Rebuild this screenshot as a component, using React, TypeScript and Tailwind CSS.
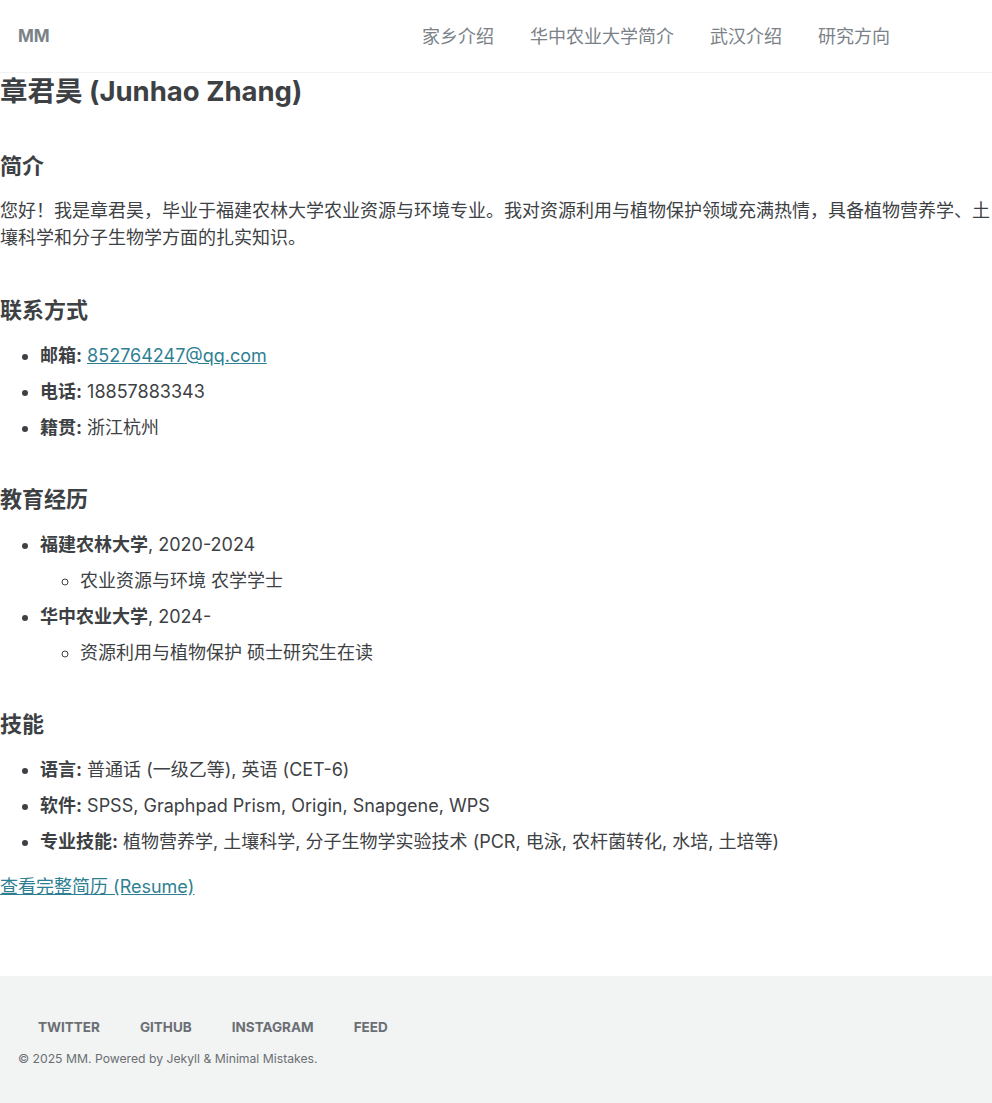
import React from "react"

const font = { fontFamily: 'Inter, "Noto Sans CJK SC", sans-serif' }

const navItems = ["家乡介绍", "华中农业大学简介", "武汉介绍", "研究方向"]
const footerLinks = ["Twitter", "GitHub", "Instagram", "Feed"]

function H2({ children, className }: { children: React.ReactNode; className: string }) {
  return <h2 className={"text-[22px] leading-[28px] font-bold " + className}>{children}</h2>
}

function Li({ children }: { children: React.ReactNode }) {
  return <li className="mb-[9px] leading-[27px]">{children}</li>
}

export default function App() {
  return (
    <div className="min-h-[1103px] flex flex-col bg-white text-[#3d4144]" style={font}>
      <header className="h-[73px] border-b border-[#f2f3f3] flex items-center pl-[18px] pr-[102px]">
        <a className="pt-[2px] text-[17px] font-bold text-[#7a8288]">MM</a>
        <nav className="ml-auto flex gap-[36px]">
          {navItems.map((n) => (
            <a key={n} className="text-[18px] text-[#7a8288]">{n}</a>
          ))}
        </nav>
      </header>

      <main className="flex-1 text-[18px]">
        <h1 className="mt-[1px] text-[27.5px] leading-[35px] font-bold">章君昊 (Junhao Zhang)</h1>

        <H2 className="mt-[43px] mb-[17px]">简介</H2>
        <p className="leading-[27px]">
          您好！我是章君昊，毕业于福建农林大学农业资源与环境专业。我对资源利用与植物保护领域充满热情，具备植物营养学、土壤科学和分子生物学方面的扎实知识。
        </p>

        <H2 className="mt-[45px] mb-[18px]">联系方式</H2>
        <ul className="list-disc pl-10">
          <Li><b>邮箱:</b> <a className="text-[#2f7f93] underline">852764247@qq.com</a></Li>
          <Li><b>电话:</b> 18857883343</Li>
          <Li><b>籍贯:</b> 浙江杭州</Li>
        </ul>

        <H2 className="mt-[44px] mb-[18px]">教育经历</H2>
        <ul className="list-disc pl-10">
          <Li>
            <b>福建农林大学</b>, 2020-2024
            <ul className="list-[circle] pl-10 mt-[9px]">
              <li className="leading-[27px]">农业资源与环境 农学学士</li>
            </ul>
          </Li>
          <Li>
            <b>华中农业大学</b>, 2024-
            <ul className="list-[circle] pl-10 mt-[9px]">
              <li className="leading-[27px]">资源利用与植物保护 硕士研究生在读</li>
            </ul>
          </Li>
        </ul>

        <H2 className="mt-[44px] mb-[18px]">技能</H2>
        <ul className="list-disc pl-10">
          <Li><b>语言:</b> 普通话 (一级乙等), 英语 (CET-6)</Li>
          <Li><b>软件:</b> SPSS, Graphpad Prism, Origin, Snapgene, WPS</Li>
          <Li><b>专业技能:</b> 植物营养学, 土壤科学, 分子生物学实验技术 (PCR, 电泳, 农杆菌转化, 水培, 土培等)</Li>
        </ul>

        <p className="mt-[18px] leading-[27px]">
          <a className="text-[#2f7f93] underline">查看完整简历 (Resume)</a>
        </p>
      </main>

      <footer className="mt-[76px] bg-[#f2f3f3] h-[127px] pt-[42px] px-[18px]">
        <div className="flex gap-[40px] pl-[20px]">
          {footerLinks.map((l) => (
            <a key={l} className="text-[13.5px] leading-[18px] font-bold uppercase text-[#6a6f73]">{l}</a>
          ))}
        </div>
        <div className="mt-[15px] text-[12.2px] leading-[16px] text-[#6a6f73]">
          © 2025 MM. Powered by Jekyll &amp; Minimal Mistakes.
        </div>
      </footer>
    </div>
  )
}
